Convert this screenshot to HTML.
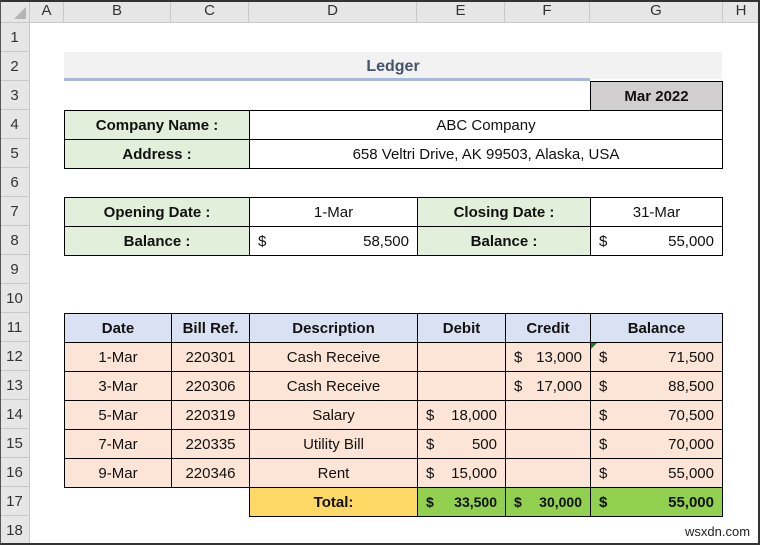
<!DOCTYPE html><html><head><style>
body{margin:0;width:760px;height:545px;overflow:hidden;background:#fff;font-family:"Liberation Sans",sans-serif;position:relative}
div{position:absolute;box-sizing:border-box}
.h{background:#e6e6e6;border-right:1px solid #c8c8c8;border-bottom:1px solid #c8c8c8;font-size:15px;color:#333;text-align:center;line-height:22px}
.r{line-height:29px}
.c{font-size:15px;line-height:29px;text-align:center;border:1px solid #000;color:#111}
.b{font-weight:bold}
.g{background:#e2efda}.p{background:#fce4d6}.bl{background:#d9e1f2}.y{background:#ffd966}.gr{background:#92d050}
.d{position:absolute;left:8px}.v{position:absolute;right:8px}
</style></head><body>
<div class="h" style="left:0;top:0;width:30px;height:23px"><span style="position:absolute;right:3px;bottom:3px;width:0;height:0;border-left:12px solid transparent;border-bottom:12px solid #b5b5b5"></span></div>
<div class="h" style="left:30px;top:0;width:34px;height:23px">A</div>
<div class="h" style="left:64px;top:0;width:107px;height:23px">B</div>
<div class="h" style="left:171px;top:0;width:78px;height:23px">C</div>
<div class="h" style="left:249px;top:0;width:168px;height:23px">D</div>
<div class="h" style="left:417px;top:0;width:88px;height:23px">E</div>
<div class="h" style="left:505px;top:0;width:85px;height:23px">F</div>
<div class="h" style="left:590px;top:0;width:133px;height:23px">G</div>
<div class="h" style="left:723px;top:0;width:37px;height:23px">H</div>
<div class="h r" style="left:0;top:23px;width:30px;height:29px;line-height:29px">1</div>
<div class="h r" style="left:0;top:52px;width:30px;height:29px;line-height:29px">2</div>
<div class="h r" style="left:0;top:81px;width:30px;height:29px;line-height:29px">3</div>
<div class="h r" style="left:0;top:110px;width:30px;height:29px;line-height:29px">4</div>
<div class="h r" style="left:0;top:139px;width:30px;height:29px;line-height:29px">5</div>
<div class="h r" style="left:0;top:168px;width:30px;height:29px;line-height:29px">6</div>
<div class="h r" style="left:0;top:197px;width:30px;height:29px;line-height:29px">7</div>
<div class="h r" style="left:0;top:226px;width:30px;height:29px;line-height:29px">8</div>
<div class="h r" style="left:0;top:255px;width:30px;height:29px;line-height:29px">9</div>
<div class="h r" style="left:0;top:284px;width:30px;height:29px;line-height:29px">10</div>
<div class="h r" style="left:0;top:313px;width:30px;height:29px;line-height:29px">11</div>
<div class="h r" style="left:0;top:342px;width:30px;height:29px;line-height:29px">12</div>
<div class="h r" style="left:0;top:371px;width:30px;height:29px;line-height:29px">13</div>
<div class="h r" style="left:0;top:400px;width:30px;height:29px;line-height:29px">14</div>
<div class="h r" style="left:0;top:429px;width:30px;height:29px;line-height:29px">15</div>
<div class="h r" style="left:0;top:458px;width:30px;height:29px;line-height:29px">16</div>
<div class="h r" style="left:0;top:487px;width:30px;height:29px;line-height:29px">17</div>
<div class="h r" style="left:0;top:516px;width:30px;height:29px;line-height:29px">18</div>

<div style="left:64px;top:52px;width:658px;height:27px;background:#f2f2f2"></div>
<div style="left:64px;top:78px;width:526px;height:3px;background:#a6b9dc"></div>
<div style="left:64px;top:52px;width:658px;height:27px;line-height:29px;text-align:center;font-weight:bold;font-size:16px;color:#44546a">Ledger</div>
<div class="c b" style="left:590px;top:81px;width:133px;height:30px;background:#d0cece">Mar 2022</div>

<div class="c b g" style="left:64px;top:110px;width:186px;height:30px">Company Name :</div>
<div class="c" style="left:249px;top:110px;width:474px;height:30px">ABC Company</div>
<div class="c b g" style="left:64px;top:139px;width:186px;height:30px">Address :</div>
<div class="c" style="left:249px;top:139px;width:474px;height:30px">658 Veltri Drive, AK 99503, Alaska, USA</div>

<div class="c b g" style="left:64px;top:197px;width:186px;height:30px">Opening Date :</div>
<div class="c" style="left:249px;top:197px;width:169px;height:30px">1-Mar</div>
<div class="c b g" style="left:417px;top:197px;width:174px;height:30px">Closing Date :</div>
<div class="c" style="left:590px;top:197px;width:133px;height:30px">31-Mar</div>
<div class="c b g" style="left:64px;top:226px;width:186px;height:30px">Balance :</div>
<div class="c" style="left:249px;top:226px;width:169px;height:30px"><span class="d">$</span><span class="v">58,500</span></div>
<div class="c b g" style="left:417px;top:226px;width:174px;height:30px">Balance :</div>
<div class="c" style="left:590px;top:226px;width:133px;height:30px"><span class="d">$</span><span class="v">55,000</span></div>

<div class="c b bl" style="left:64px;top:313px;width:108px;height:30px">Date</div>
<div class="c b bl" style="left:171px;top:313px;width:79px;height:30px">Bill Ref.</div>
<div class="c b bl" style="left:249px;top:313px;width:169px;height:30px">Description</div>
<div class="c b bl" style="left:417px;top:313px;width:89px;height:30px">Debit</div>
<div class="c b bl" style="left:505px;top:313px;width:86px;height:30px">Credit</div>
<div class="c b bl" style="left:590px;top:313px;width:133px;height:30px">Balance</div>

<div class="c p" style="left:64px;top:342px;width:108px;height:30px">1-Mar</div>
<div class="c p" style="left:171px;top:342px;width:79px;height:30px">220301</div>
<div class="c p" style="left:249px;top:342px;width:169px;height:30px">Cash Receive</div>
<div class="c p" style="left:417px;top:342px;width:89px;height:30px"></div>
<div class="c p" style="left:505px;top:342px;width:86px;height:30px"><span class="d">$</span><span class="v">13,000</span></div>
<div class="c p" style="left:590px;top:342px;width:133px;height:30px"><span class="d">$</span><span class="v">71,500</span></div>
<div style="left:591px;top:343px;width:0;height:0;border-top:6px solid #1e7b34;border-right:6px solid transparent"></div>

<div class="c p" style="left:64px;top:371px;width:108px;height:30px">3-Mar</div>
<div class="c p" style="left:171px;top:371px;width:79px;height:30px">220306</div>
<div class="c p" style="left:249px;top:371px;width:169px;height:30px">Cash Receive</div>
<div class="c p" style="left:417px;top:371px;width:89px;height:30px"></div>
<div class="c p" style="left:505px;top:371px;width:86px;height:30px"><span class="d">$</span><span class="v">17,000</span></div>
<div class="c p" style="left:590px;top:371px;width:133px;height:30px"><span class="d">$</span><span class="v">88,500</span></div>

<div class="c p" style="left:64px;top:400px;width:108px;height:30px">5-Mar</div>
<div class="c p" style="left:171px;top:400px;width:79px;height:30px">220319</div>
<div class="c p" style="left:249px;top:400px;width:169px;height:30px">Salary</div>
<div class="c p" style="left:417px;top:400px;width:89px;height:30px"><span class="d">$</span><span class="v">18,000</span></div>
<div class="c p" style="left:505px;top:400px;width:86px;height:30px"></div>
<div class="c p" style="left:590px;top:400px;width:133px;height:30px"><span class="d">$</span><span class="v">70,500</span></div>

<div class="c p" style="left:64px;top:429px;width:108px;height:30px">7-Mar</div>
<div class="c p" style="left:171px;top:429px;width:79px;height:30px">220335</div>
<div class="c p" style="left:249px;top:429px;width:169px;height:30px">Utility Bill</div>
<div class="c p" style="left:417px;top:429px;width:89px;height:30px"><span class="d">$</span><span class="v">500</span></div>
<div class="c p" style="left:505px;top:429px;width:86px;height:30px"></div>
<div class="c p" style="left:590px;top:429px;width:133px;height:30px"><span class="d">$</span><span class="v">70,000</span></div>

<div class="c p" style="left:64px;top:458px;width:108px;height:30px">9-Mar</div>
<div class="c p" style="left:171px;top:458px;width:79px;height:30px">220346</div>
<div class="c p" style="left:249px;top:458px;width:169px;height:30px">Rent</div>
<div class="c p" style="left:417px;top:458px;width:89px;height:30px"><span class="d">$</span><span class="v">15,000</span></div>
<div class="c p" style="left:505px;top:458px;width:86px;height:30px"></div>
<div class="c p" style="left:590px;top:458px;width:133px;height:30px"><span class="d">$</span><span class="v">55,000</span></div>

<div class="c b y" style="left:249px;top:487px;width:169px;height:30px">Total:</div>
<div class="c b gr" style="left:417px;top:487px;width:89px;height:30px;font-size:14px"><span class="d">$</span><span class="v">33,500</span></div>
<div class="c b gr" style="left:505px;top:487px;width:86px;height:30px;font-size:14px"><span class="d">$</span><span class="v">30,000</span></div>
<div class="c b gr" style="left:590px;top:487px;width:133px;height:30px"><span class="d">$</span><span class="v">55,000</span></div>

<div style="left:685px;top:524px;font-size:13px;color:#222;line-height:16px">wsxdn.com</div>
<div style="left:0;top:0;width:760px;height:545px;border:2px solid #333;border-left:1px solid #555"></div>
</body></html>
